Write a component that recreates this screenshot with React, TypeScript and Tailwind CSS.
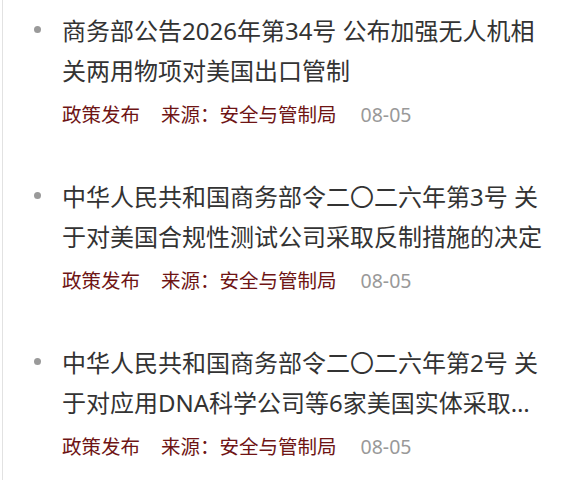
import React from 'react'

interface NewsItem {
  id: number
  title: string
  category: string
  source: string
  date: string
}

const items: NewsItem[] = [
  {
    id: 1,
    title: '商务部公告2026年第34号 公布加强无人机相关两用物项对美国出口管制',
    category: '政策发布',
    source: '安全与管制局',
    date: '08-05',
  },
  {
    id: 2,
    title: '中华人民共和国商务部令二〇二六年第3号 关于对美国合规性测试公司采取反制措施的决定',
    category: '政策发布',
    source: '安全与管制局',
    date: '08-05',
  },
  {
    id: 3,
    title:
      '中华人民共和国商务部令二〇二六年第2号 关于对应用DNA科学公司等6家美国实体采取反制措施的决定',
    category: '政策发布',
    source: '安全与管制局',
    date: '08-05',
  },
]

const font = {
  fontFamily: '"Microsoft YaHei", "Noto Sans", "Noto Sans CJK SC", sans-serif',
}

export default function App() {
  return (
    <div className="w-[564px] h-[480px] bg-white overflow-hidden" style={font}>
      <div className="ml-[2px] h-full border-l border-[#e2e2e2] pt-[11px]">
        <ul>
          {items.map((item) => (
            <li key={item.id} className="flex pb-12">
              {/* bullet */}
              <div className="w-[59px] shrink-0 flex justify-end pr-[21px] pt-[15px]">
                <span className="block w-[7px] h-[7px] rounded-full bg-[#9a9a9a]" />
              </div>
              <div className="w-[486px]">
                <a
                  href="#"
                  className="text-[24px] leading-[40px] text-[#333333] line-clamp-2"
                >
                  {item.title}
                </a>
                <div className="mt-[10px] flex items-center text-[19.5px] leading-[28px] whitespace-nowrap">
                  <span className="text-[#6e1414] mr-[21px]">{item.category}</span>
                  <span className="text-[#6e1414] mr-[24px]">来源：{item.source}</span>
                  <span className="text-[#999999]">{item.date}</span>
                </div>
              </div>
            </li>
          ))}
        </ul>
      </div>
    </div>
  )
}
